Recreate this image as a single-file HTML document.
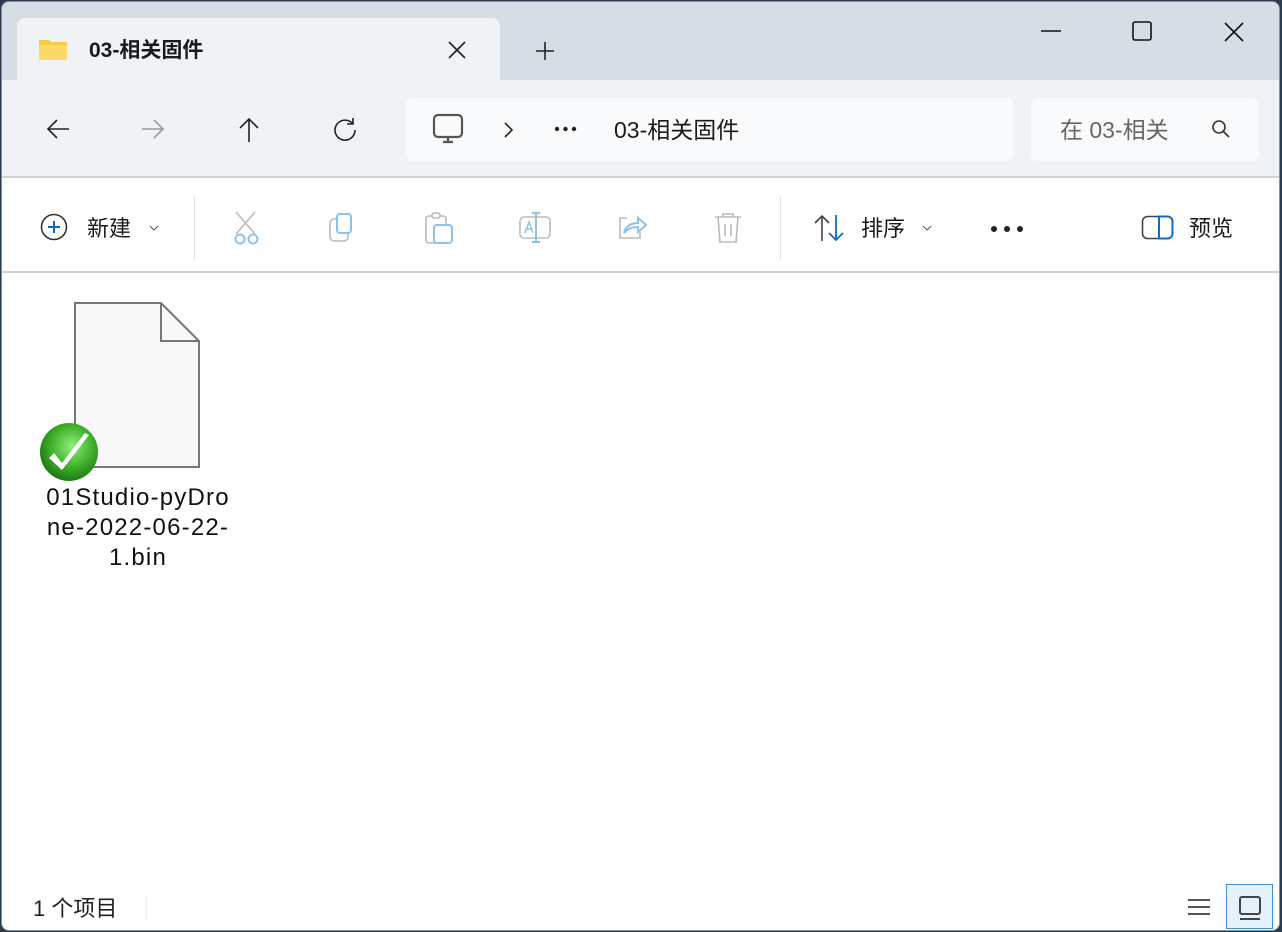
<!DOCTYPE html>
<html><head><meta charset="utf-8"><style>
*{margin:0;padding:0;box-sizing:border-box}
body{width:1282px;height:932px;background:#2b3a4c;overflow:hidden;font-family:"Liberation Sans","Noto Sans CJK SC",sans-serif;position:relative}
.win{position:absolute;left:1px;top:1px;width:1279px;height:930px;background:#fff;border-radius:8px;overflow:hidden;border:1px solid #8a9099}
.title{position:absolute;left:0;top:0;width:100%;height:78px;background:#d6dde5}
.tab{position:absolute;left:15px;top:16px;width:483px;height:64px;background:#eff3f6;border-radius:8px 8px 0 0}
.nav{position:absolute;left:0;top:78px;width:100%;height:98px;background:#eff3f6;border-bottom:2px solid #cdd3d9}
.tool{position:absolute;left:0;top:178px;width:100%;height:93px;background:#fff;border-bottom:2px solid #cdd3d9}
.abs{position:absolute}
.t{position:absolute;color:#1a1a1a;white-space:nowrap}
svg{position:absolute;overflow:visible}
</style></head><body>
<div class="win">
<div class="title"></div>
<div class="tab"></div>
<svg style="left:36px;top:35px" width="30" height="24"><path d="M1 3h10l2 2h16v18H1z" fill="#f8cc4a"/><path d="M1 8h28v15H1z" fill="#fcd96b"/></svg>
<div class="t" style="left:87px;top:32px;font-size:21px;font-weight:bold">03-相关固件</div>
<svg style="left:446px;top:39px" width="18" height="18"><path d="M1 1L17 17M17 1L1 17" stroke="#222" stroke-width="1.6"/></svg>
<svg style="left:533px;top:39px" width="20" height="20"><path d="M10 1V19M1 10H19" stroke="#222" stroke-width="1.6"/></svg>
<svg style="left:1039px;top:28px" width="20" height="2"><path d="M0 1H20" stroke="#111" stroke-width="1.5"/></svg>
<svg style="left:1130px;top:19px" width="20" height="20"><rect x="1" y="1" width="18" height="18" rx="2" fill="none" stroke="#111" stroke-width="1.6"/></svg>
<svg style="left:1222px;top:20px" width="20" height="20"><path d="M1 1L19 19M19 1L1 19" stroke="#111" stroke-width="1.6"/></svg>
<div class="nav"></div>
<svg style="left:44px;top:116px" width="24" height="22"><path d="M23 11H2M11 2L2 11L11 20" stroke="#222" stroke-width="1.6" fill="none"/></svg>
<svg style="left:139px;top:116px" width="24" height="22"><path d="M1 11H22M13 2L22 11L13 20" stroke="#999" stroke-width="1.6" fill="none"/></svg>
<svg style="left:235px;top:115px" width="24" height="26"><path d="M12 25V2M3 11L12 2L21 11" stroke="#222" stroke-width="1.6" fill="none"/></svg>
<svg style="left:330px;top:115px" width="26" height="26"><path d="M20 6A10 10 0 1 0 23 13M21 1V7H15" stroke="#222" stroke-width="1.6" fill="none"/></svg>
<div class="abs" style="left:404px;top:96px;width:608px;height:63px;background:#f9fafb;border-radius:7px"></div>
<svg style="left:431px;top:112px" width="32" height="30"><rect x="1" y="1" width="28" height="22" rx="4" fill="none" stroke="#555" stroke-width="2.2"/><path d="M10 28H20M15 23V28" stroke="#555" stroke-width="2.2"/></svg>
<svg style="left:501px;top:119px" width="12" height="18"><path d="M2 2L9 9L2 16" stroke="#222" stroke-width="1.6" fill="none"/></svg>
<svg style="left:552px;top:124px" width="24" height="6"><circle cx="3" cy="3" r="2.2" fill="#222"/><circle cx="11.5" cy="3" r="2.2" fill="#222"/><circle cx="20" cy="3" r="2.2" fill="#222"/></svg>
<div class="t" style="left:612px;top:109px;font-size:23px">03-相关固件</div>
<div class="abs" style="left:1029px;top:96px;width:228px;height:63px;background:#f9fafb;border-radius:7px"></div>
<div class="t" style="left:1058px;top:109px;font-size:23px;color:#666;width:110px;overflow:hidden">在 03-相关</div>
<svg style="left:1209px;top:117px" width="20" height="20"><circle cx="8" cy="8" r="6" fill="none" stroke="#333" stroke-width="1.6"/><path d="M12 12L18 18" stroke="#333" stroke-width="1.6"/></svg>
<div class="tool"></div>
<svg style="left:37px;top:210px" width="30" height="30"><circle cx="15" cy="15" r="12.5" fill="none" stroke="#333" stroke-width="1.6"/><path d="M15 9V21M9 15H21" stroke="#0a6cc9" stroke-width="2"/></svg>
<div class="t" style="left:85px;top:209px;font-size:22px">新建</div>
<svg style="left:147px;top:223px" width="10" height="6"><path d="M1 1L5 5L9 1" stroke="#555" fill="none"/></svg>
<div class="abs" style="left:192px;top:194px;width:1px;height:64px;background:#e3e3e3"></div>
<svg style="left:231px;top:209px" width="32" height="34"><path d="M3 1L22 23M22 1L3 23" stroke="#bbb" stroke-width="1.6"/><circle cx="7" cy="28" r="4.5" fill="none" stroke="#8cc2ee" stroke-width="2"/><circle cx="20" cy="28" r="4.5" fill="none" stroke="#8cc2ee" stroke-width="2"/></svg>
<svg style="left:327px;top:211px" width="30" height="30"><rect x="1" y="6" width="18" height="22" rx="4" fill="none" stroke="#bbb" stroke-width="1.6"/><rect x="8" y="1" width="14" height="19" rx="3" fill="#fff" stroke="#8cc2ee" stroke-width="2"/></svg>
<svg style="left:422px;top:209px" width="32" height="34"><rect x="2" y="5" width="20" height="27" rx="3" fill="none" stroke="#bbb" stroke-width="1.6"/><rect x="8" y="2" width="8" height="5" rx="2" fill="#fff" stroke="#bbb" stroke-width="1.6"/><rect x="10" y="14" width="18" height="18" rx="3" fill="#fff" stroke="#8cc2ee" stroke-width="2"/></svg>
<svg style="left:517px;top:209px" width="34" height="34"><rect x="1" y="6" width="30" height="21" rx="4" fill="none" stroke="#bbb" stroke-width="1.6"/><path d="M17 2V31M13 2H21M13 31H21" stroke="#8cc2ee" stroke-width="2" /><path d="M6 22L10 11L14 22M7 18H13" stroke="#8cc2ee" stroke-width="1.5" fill="none"/></svg>
<svg style="left:614px;top:210px" width="32" height="32"><path d="M11 6H4V26H24V20" stroke="#bbb" stroke-width="1.6" fill="none"/><path d="M8 21C10 13 16 11 22 11V6L30 13L22 20V15C16 15 11 17 8 21Z" fill="none" stroke="#8cc2ee" stroke-width="2"/></svg>
<svg style="left:711px;top:210px" width="30" height="32"><path d="M2 5H28M10 5V2H20V5M5 5L7 30H23L25 5M12 12V24M18 12V24" stroke="#bbb" stroke-width="1.6" fill="none"/></svg>
<div class="abs" style="left:778px;top:194px;width:1px;height:64px;background:#e3e3e3"></div>
<svg style="left:811px;top:212px" width="34" height="28"><path d="M9 27V2M2 9L9 2L16 9" stroke="#444" stroke-width="1.6" fill="none"/><path d="M23 1V26M16 19L23 26L30 19" stroke="#0a6cc9" stroke-width="1.8" fill="none"/></svg>
<div class="t" style="left:859px;top:209px;font-size:22px">排序</div>
<svg style="left:920px;top:223px" width="10" height="6"><path d="M1 1L5 5L9 1" stroke="#555" fill="none"/></svg>
<svg style="left:988px;top:223px" width="36" height="8"><circle cx="4" cy="4" r="3" fill="#222"/><circle cx="17" cy="4" r="3" fill="#222"/><circle cx="30" cy="4" r="3" fill="#222"/></svg>
<svg style="left:1139px;top:213px" width="34" height="26"><rect x="1.5" y="1.5" width="30" height="22" rx="5" fill="none" stroke="#444" stroke-width="1.6"/><path d="M18 1.5H27A5 5 0 0 1 31.5 6.5V18.5A5 5 0 0 1 27 23.5H18Z" fill="none" stroke="#0a6cc9" stroke-width="2"/></svg>
<div class="t" style="left:1187px;top:209px;font-size:22px">预览</div>
<svg style="left:72px;top:300px" width="127" height="168"><path d="M1 1H87L125 39V165H1Z" fill="#f8f8f8" stroke="#767676" stroke-width="2"/><path d="M87 1V39H125" fill="none" stroke="#767676" stroke-width="2"/></svg>
<svg style="left:38px;top:421px" width="60" height="60"><defs><radialGradient id="g" cx="0.55" cy="0.4" r="0.6"><stop offset="0" stop-color="#8ef07a"/><stop offset="0.6" stop-color="#3fb02a"/><stop offset="1" stop-color="#1e7a12"/></radialGradient></defs><circle cx="29" cy="29" r="29" fill="url(#g)"/><path d="M9 35L22 47L49 12L45 10L22 40L14 30Z" fill="#fff"/></svg>
<div class="t" style="left:20px;top:481px;width:232px;text-align:center;font-size:24px;letter-spacing:1.2px;line-height:30px;white-space:normal;color:#111">01Studio-pyDro<br>ne-2022-06-22-<br>1.bin</div>
<div class="t" style="left:31px;top:889px;font-size:22px;color:#222">1 个项目</div>
<div class="abs" style="left:144px;top:893px;width:1px;height:26px;background:#eee"></div>
<svg style="left:1185px;top:896px" width="24" height="20"><path d="M1 2H23M1 9H23M1 16H23" stroke="#555" stroke-width="2"/></svg>
<div class="abs" style="left:1224px;top:882px;width:47px;height:45px;background:#e6f2fb;border:1px solid #3f8fd6"></div>
<svg style="left:1237px;top:894px" width="24" height="26"><rect x="1" y="1" width="20" height="17" rx="2" fill="none" stroke="#444" stroke-width="2"/><path d="M1 23H21" stroke="#444" stroke-width="2"/></svg>
</div>
</body></html>
